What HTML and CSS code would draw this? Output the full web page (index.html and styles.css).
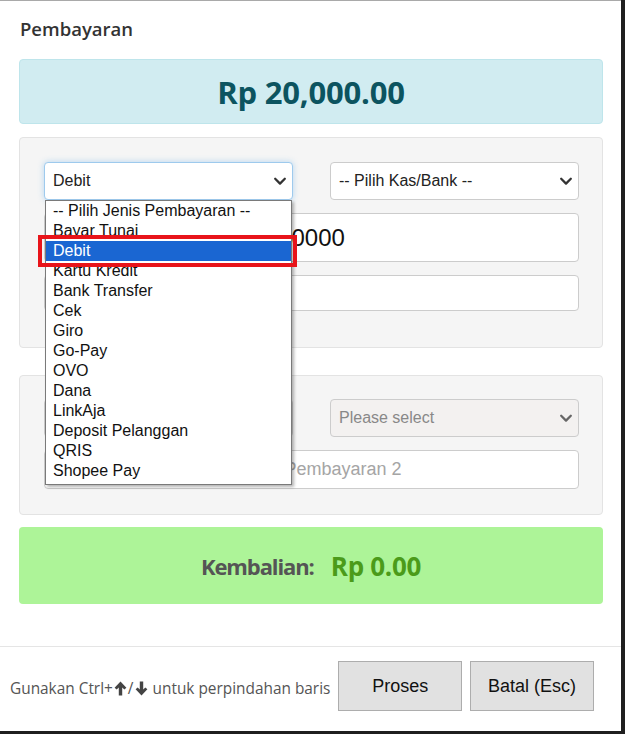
FILE: index.html
```html
<!DOCTYPE html>
<html>
<head>
    <meta charset="utf-8" />
    <title>Pembayaran</title>
    <link rel="stylesheet" href="styles.css">
</head>
<body>
    <div class="modal">
        <div class="modal-header">
            <h4 class="judul">Pembayaran</h4>
        </div>
        <div class="modal-body">
            <div class="alert-total">Rp 20,000.00</div>

            <div class="panel">
                <div class="dropdown-wrap">
                    <div class="pilihan fokus">
                        <span>Debit</span>
                        <svg class="chevron" viewBox="0 0 16 16"><path d="M2.5 5.5l5.5 5.5 5.5-5.5" /></svg>
                    </div>
                    <ul class="daftar">
                        <li>-- Pilih Jenis Pembayaran --</li>
                        <li>Bayar Tunai</li>
                        <li class="terpilih">Debit</li>
                        <li>Kartu Kredit</li>
                        <li>Bank Transfer</li>
                        <li>Cek</li>
                        <li>Giro</li>
                        <li>Go-Pay</li>
                        <li>OVO</li>
                        <li>Dana</li>
                        <li>LinkAja</li>
                        <li>Deposit Pelanggan</li>
                        <li>QRIS</li>
                        <li>Shopee Pay</li>
                    </ul>
                    <div class="tanda"></div>
                </div>
                <div class="pilihan">
                    <span>-- Pilih Kas/Bank --</span>
                    <svg class="chevron" viewBox="0 0 16 16"><path d="M2.5 5.5l5.5 5.5 5.5-5.5" /></svg>
                </div>
                <div class="isian besar lebar">20000</div>
                <div class="isian kecil lebar"></div>
            </div>

            <div class="panel panel-2">
                <!-- tertutup daftar pilihan di atasnya -->
                <div class="pilihan nonaktif">
                    <span></span>
                    <svg class="chevron" viewBox="0 0 16 16"><path d="M2.5 5.5l5.5 5.5 5.5-5.5" /></svg>
                </div>
                <div class="pilihan nonaktif">
                    <span>Please select</span>
                    <svg class="chevron" viewBox="0 0 16 16"><path d="M2.5 5.5l5.5 5.5 5.5-5.5" /></svg>
                </div>
                <div class="isian sedang lebar nonaktif placeholder">Jumlah Pembayaran 2</div>
            </div>

            <div class="kembalian">
                <span class="label-kembali">Kembalian:</span>
                <span class="nilai-kembali">Rp 0.00</span>
            </div>
        </div>
        <div class="modal-footer">
            <div class="petunjuk">
                Gunakan Ctrl+<svg class="panah" viewBox="0 0 12 14"><path d="M6 0.5L11.5 6.2 9.6 8 7.6 6V13.5H4.4V6L2.4 8 0.5 6.2z" /></svg>/<svg class="panah" viewBox="0 0 12 14"><path d="M6 13.5L11.5 7.8 9.6 6 7.6 8V0.5H4.4V8L2.4 6 0.5 7.8z" /></svg> untuk perpindahan baris
            </div>
            <div class="tombol">Proses</div>
            <div class="tombol">Batal (Esc)</div>
        </div>
    </div>
</body>
</html>
```

FILE: styles.css
```css
html, body {
    margin: 0;
    height: 100%;
    background-color: #1f1f1f;
    font-family: 'Open Sans', 'Noto Sans', sans-serif;
}

.modal {
    width: 621px;
    height: 731px;
    box-sizing: border-box;
    background-color: white;
    border-top: 1px solid #a9a9a9;
}

.modal-header {
    padding: 15px 19px 0 20px;
}

.judul {
    margin: 0;
    font-size: 18.5px;
    line-height: 26px;
    font-weight: 600;
    color: #333;
}

.modal-body {
    padding: 17px 18px 42px 19px;
}

.alert-total {
    height: 63px;
    border: 1px solid #bee5eb;
    border-radius: 4px;
    background-color: #d1ecf1;
    color: #0c5460;
    font-size: 31px;
    font-weight: 700;
    letter-spacing: -0.2px;
    display: flex;
    align-items: center;
    justify-content: center;
    margin-bottom: 13px;
}

.panel {
    display: grid;
    grid-template-columns: 1fr 1fr;
    column-gap: 37px;
    row-gap: 13px;
    padding: 24px 23px 36px 24px;
    background-color: #f5f5f5;
    border: 1px solid #e3e3e3;
    border-radius: 4px;
}

.panel-2 {
    margin-top: 27px;
    padding-top: 23px;
    padding-bottom: 25px;
}

.lebar {
    grid-column: 1 / 3;
}

.pilihan {
    height: 38px;
    box-sizing: border-box;
    display: flex;
    align-items: center;
    justify-content: space-between;
    padding: 0 5px 0 8px;
    background-color: white;
    border: 1px solid #ccc;
    border-radius: 4px;
    font-family: 'Liberation Sans', Arial, sans-serif;
    font-size: 16px;
    color: #222;
}

.fokus {
    border-color: #9ecaed;
    box-shadow: 0 0 6px rgba(102, 175, 233, 0.45);
}

.chevron {
    width: 14px;
    height: 14px;
    fill: none;
    stroke: #333;
    stroke-width: 2.6;
    stroke-linecap: round;
    stroke-linejoin: round;
}

.nonaktif {
    background-color: #f3f1f0;
    color: #888;
}

.nonaktif .chevron {
    stroke: #666;
}

.isian {
    box-sizing: border-box;
    background-color: white;
    border: 1px solid #ccc;
    border-radius: 4px;
    font-family: 'Liberation Sans', Arial, sans-serif;
    text-align: center;
    color: #111;
}

.besar {
    height: 49px;
    line-height: 47px;
    font-size: 24px;
}

.kecil {
    height: 36px;
}

.sedang {
    height: 39px;
    line-height: 37px;
    font-size: 18px;
}

.placeholder {
    color: #a5a5a5;
}

.dropdown-wrap {
    position: relative;
}

.daftar {
    position: absolute;
    top: 38px;
    left: 1px;
    width: 247px;
    box-sizing: border-box;
    margin: 0;
    padding: 0 0 3px 0;
    list-style: none;
    background-color: white;
    border: 1px solid #7a7a7a;
    box-shadow: 2px 2px 3px rgba(0, 0, 0, 0.3);
    font-family: 'Liberation Sans', Arial, sans-serif;
    font-size: 16px;
    line-height: 20px;
    color: #111;
    z-index: 2;
}

.daftar li {
    padding-left: 7px;
}

.daftar .terpilih {
    background-color: #1a66d2;
    color: white;
}

.tanda {
    position: absolute;
    left: -6px;
    top: 73px;
    width: 259px;
    height: 32px;
    box-sizing: border-box;
    border: 4px solid #e8141a;
    z-index: 3;
}

.kembalian {
    height: 77px;
    margin-top: 12px;
    border-radius: 4px;
    background-color: #adf498;
    display: flex;
    align-items: center;
    justify-content: center;
    gap: 17px;
    font-size: 22px;
    font-weight: 700;
}

.label-kembali {
    color: #555;
    letter-spacing: -1.1px;
}

.nilai-kembali {
    color: #4b9b1a;
    font-size: 26px;
    letter-spacing: -0.3px;
}

.modal-footer {
    display: flex;
    align-items: center;
    gap: 8px;
    padding: 14px 27px 0 10px;
    border-top: 1px solid #e5e5e5;
}

.petunjuk {
    flex-grow: 1;
    font-size: 15.4px;
    color: #555;
    padding-top: 4px;
    white-space: nowrap;
}

.panah {
    width: 13px;
    height: 15px;
    fill: #444;
    vertical-align: -2px;
    margin: 0 1px;
}

.tombol {
    width: 124px;
    height: 50px;
    box-sizing: border-box;
    display: flex;
    align-items: center;
    justify-content: center;
    background-color: #e1e1e1;
    border: 1px solid #adadad;
    font-family: 'Liberation Sans', Arial, sans-serif;
    font-size: 18px;
    color: #111;
}
```
